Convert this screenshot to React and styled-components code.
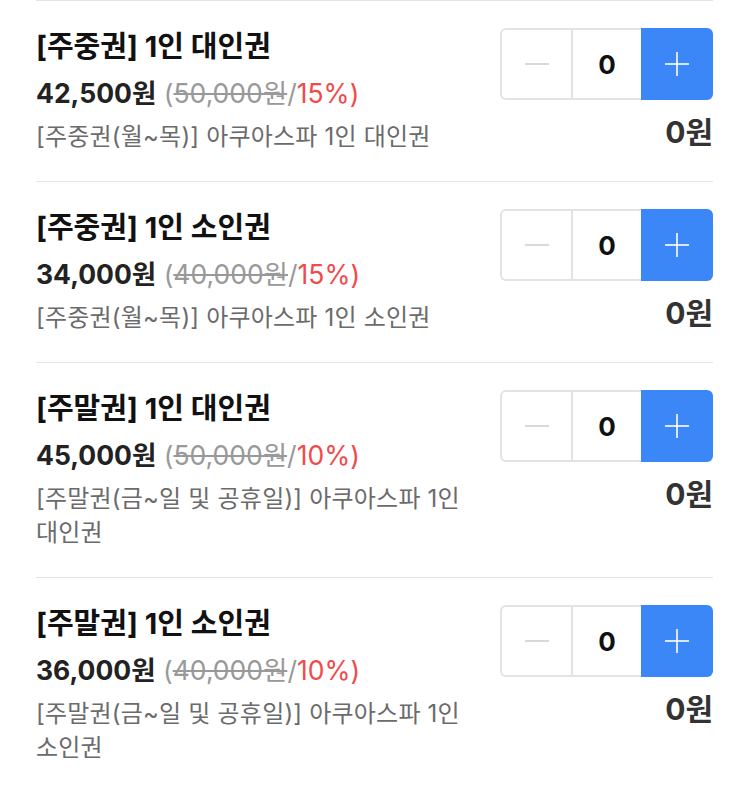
import React from "react";
import styled, { createGlobalStyle } from "styled-components";

const GlobalStyle = createGlobalStyle`
  body {
    margin: 0;
    background: #ffffff;
    font-family: Inter, "Noto Sans CJK KR", sans-serif;
    -webkit-font-smoothing: antialiased;
  }
`;

const List = styled.main`
  padding: 0 37px 0 36px;
`;

const Row = styled.section`
  display: flex;
  gap: 24px;
  padding: 27px 0;
  border-top: 1px solid #e4e4e4;
`;

const Info = styled.div`
  flex: 1;
  min-width: 0;
`;

const Title = styled.h2`
  margin: 0;
  font-size: 29px;
  line-height: 38px;
  font-weight: 700;
  color: #111;
`;

const PriceLine = styled.div`
  margin-top: 10px;
  font-size: 26.5px;
  line-height: 34px;
`;

const Price = styled.strong`
  font-weight: 700;
  color: #222;
`;

const Original = styled.span`
  color: #999;
`;

const Struck = styled.s`
  color: #999;
`;

const Discount = styled.span`
  color: #f24a4a;
`;

const Desc = styled.p`
  margin: 10px 0 0;
  font-size: 24px;
  line-height: 34px;
  color: #6b6b6b;
  letter-spacing: 0.2px;
`;

const Side = styled.div`
  display: flex;
  flex-direction: column;
  align-items: flex-end;
`;

const Stepper = styled.div`
  display: grid;
  grid-template-columns: 71px 70px 72px;
  height: 72px;
`;

const MinusButton = styled.button`
  border: 2px solid #e3e3e3;
  border-right: none;
  border-radius: 6px 0 0 6px;
  padding: 0;
  display: flex;
  align-items: center;
  justify-content: center;
  background: #fff;
  color: #d0d0d0;
`;

const Count = styled.div`
  display: flex;
  align-items: center;
  justify-content: center;
  border: 2px solid #e3e3e3;
  border-right: none;
  font-size: 26px;
  font-weight: 700;
  color: #111;
`;

const PlusButton = styled.button`
  border: none;
  border-radius: 0 6px 6px 0;
  padding: 0;
  display: flex;
  align-items: center;
  justify-content: center;
  background: #3b87f7;
  color: #fff;
`;

const Total = styled.div`
  margin-top: 14px;
  font-size: 30px;
  line-height: 36px;
  font-weight: 700;
  color: #333;
`;

const Line = ({ vertical }) => (
  <svg width="26" height="26" viewBox="0 0 26 26">
    <line x1="1" y1="13" x2="25" y2="13" stroke="currentColor" strokeWidth="1.6" />
    {vertical && <line x1="13" y1="1" x2="13" y2="25" stroke="currentColor" strokeWidth="1.6" />}
  </svg>
);

const items = [
  {
    title: "[주중권] 1인 대인권",
    price: "42,500원",
    original: "50,000원",
    rate: "15%",
    desc: "[주중권(월~목)] 아쿠아스파 1인 대인권",
  },
  {
    title: "[주중권] 1인 소인권",
    price: "34,000원",
    original: "40,000원",
    rate: "15%",
    desc: "[주중권(월~목)] 아쿠아스파 1인 소인권",
  },
  {
    title: "[주말권] 1인 대인권",
    price: "45,000원",
    original: "50,000원",
    rate: "10%",
    desc: "[주말권(금~일 및 공휴일)] 아쿠아스파 1인 대인권",
  },
  {
    title: "[주말권] 1인 소인권",
    price: "36,000원",
    original: "40,000원",
    rate: "10%",
    desc: "[주말권(금~일 및 공휴일)] 아쿠아스파 1인 소인권",
  },
];

const App = () => (
  <>
    <GlobalStyle />
    <List>
      {items.map((item) => (
        <Row key={item.title}>
          <Info>
            <Title>{item.title}</Title>
            <PriceLine>
              <Price>{item.price}</Price>{" "}
              <Original>
                (<Struck>{item.original}</Struck>/<Discount>{item.rate})</Discount>
              </Original>
            </PriceLine>
            <Desc>{item.desc}</Desc>
          </Info>
          <Side>
            <Stepper>
              <MinusButton aria-label="minus">
                <Line />
              </MinusButton>
              <Count>0</Count>
              <PlusButton aria-label="plus">
                <Line vertical />
              </PlusButton>
            </Stepper>
            <Total>0원</Total>
          </Side>
        </Row>
      ))}
    </List>
  </>
);

export default App;
